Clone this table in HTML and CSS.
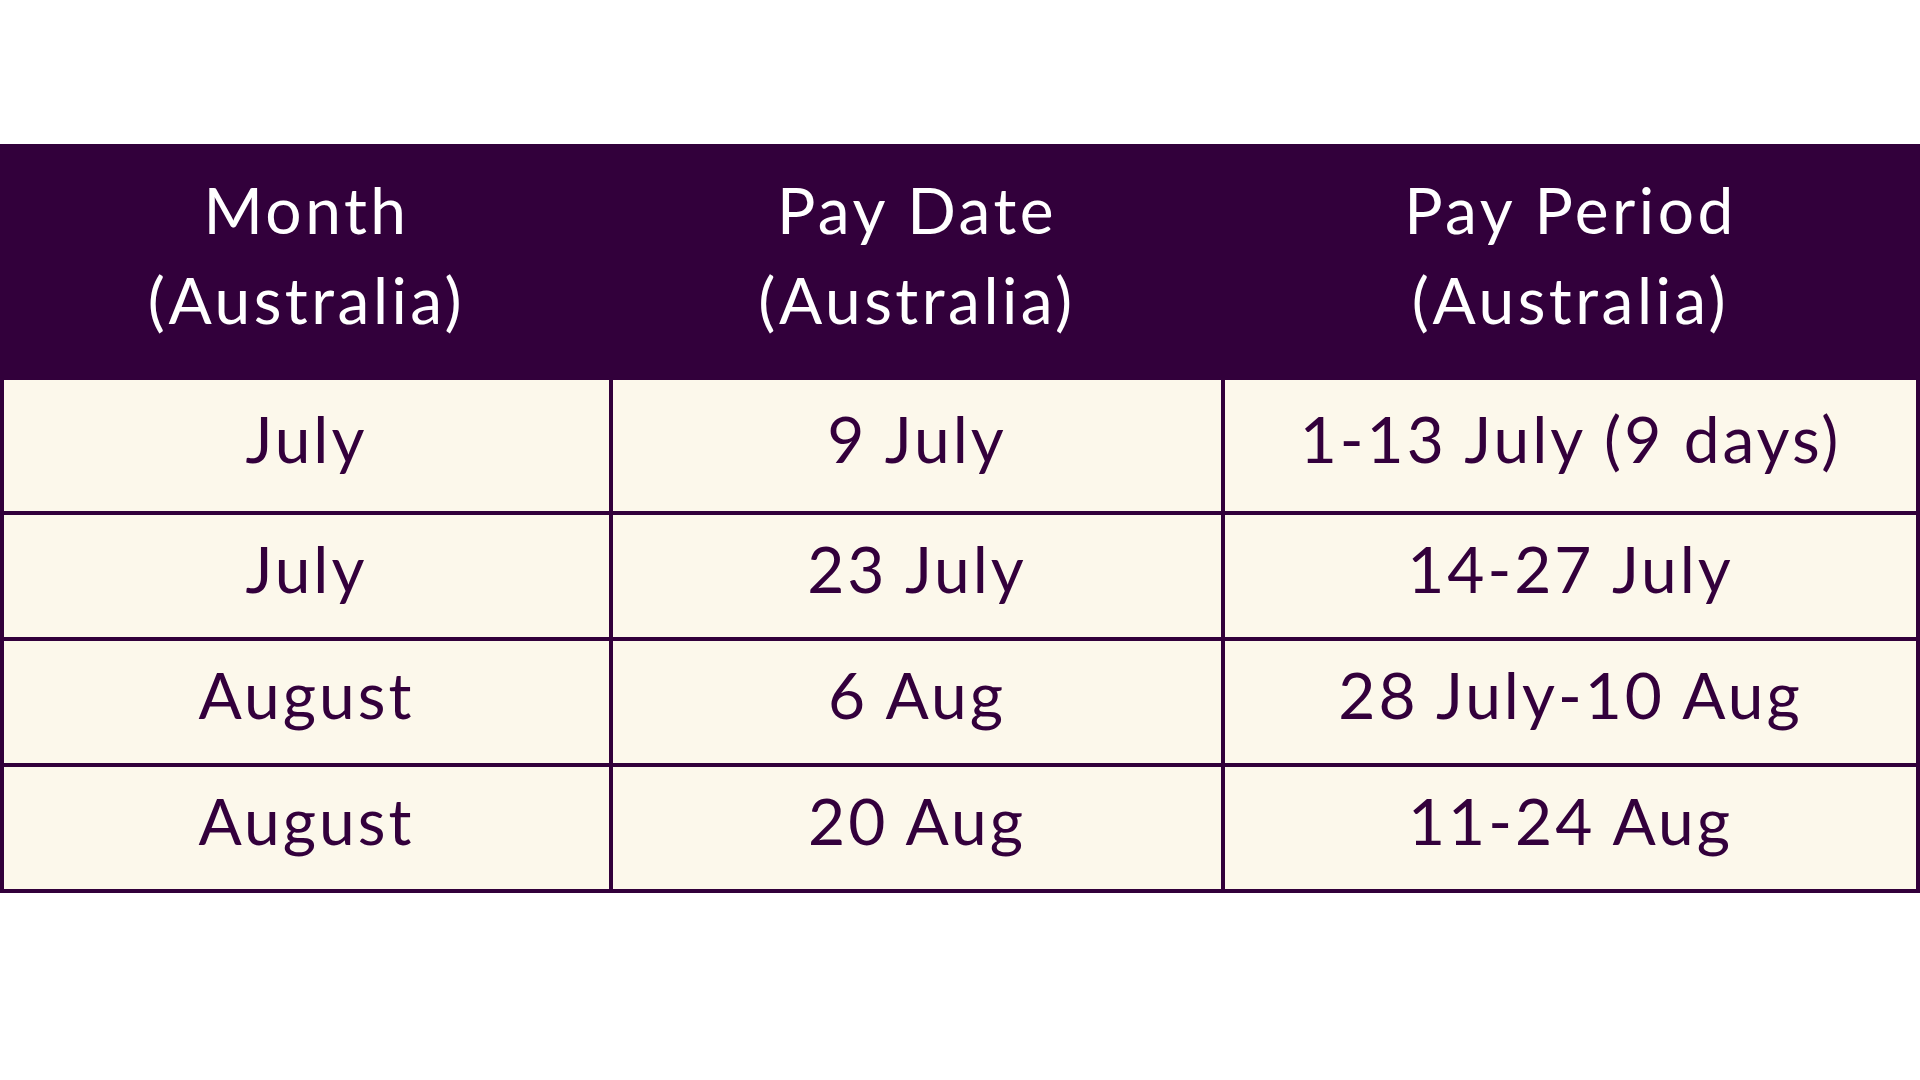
FILE: index.html
```html
<!DOCTYPE html>
<html lang="en">
<head>
<meta charset="utf-8">
<title>Pay Dates (Australia)</title>
<link rel="stylesheet" href="styles.css">
</head>
<body>
<main class="page">
  <div class="table">
    <div class="cell head">Month<br>(Australia)</div>
    <div class="cell head">Pay Date<br>(Australia)</div>
    <div class="cell head">Pay Period<br>(Australia)</div>

    <div class="cell">July</div>
    <div class="cell">9 July</div>
    <div class="cell">1-13 July (9 days)</div>

    <div class="cell">July</div>
    <div class="cell">23 July</div>
    <div class="cell">14-27 July</div>

    <div class="cell">August</div>
    <div class="cell">6 Aug</div>
    <div class="cell">28 July-10 Aug</div>

    <div class="cell">August</div>
    <div class="cell">20 Aug</div>
    <div class="cell">11-24 Aug</div>
  </div>
</main>
</body>
</html>
```

FILE: styles.css
```css
html, body {
  margin: 0;
  padding: 0;
  background: #ffffff;
}

.page {
  padding-top: 144px;
  height: 1080px;
  box-sizing: border-box;
}

.table {
  display: grid;
  grid-template-columns: 605px 608px 691px;
  grid-template-rows: 232px 131px 122px 122px 122px;
  gap: 4px;
  padding: 0 4px 4px 4px;
  background: #32003b;
  font-family: "Lato", "Open Sans", sans-serif;
  font-weight: 400;
  font-size: 64px;
  letter-spacing: 3px;
  color: #33003c;
}

.cell {
  display: flex;
  align-items: center;
  justify-content: center;
  text-align: center;
  background: #fcf8eb;
  line-height: 90px;
  padding-bottom: 14px;
  box-sizing: border-box;
}

.cell.head {
  background: #32003b;
  color: #ffffff;
  letter-spacing: 3.5px;
  padding-bottom: 10px;
}
```
